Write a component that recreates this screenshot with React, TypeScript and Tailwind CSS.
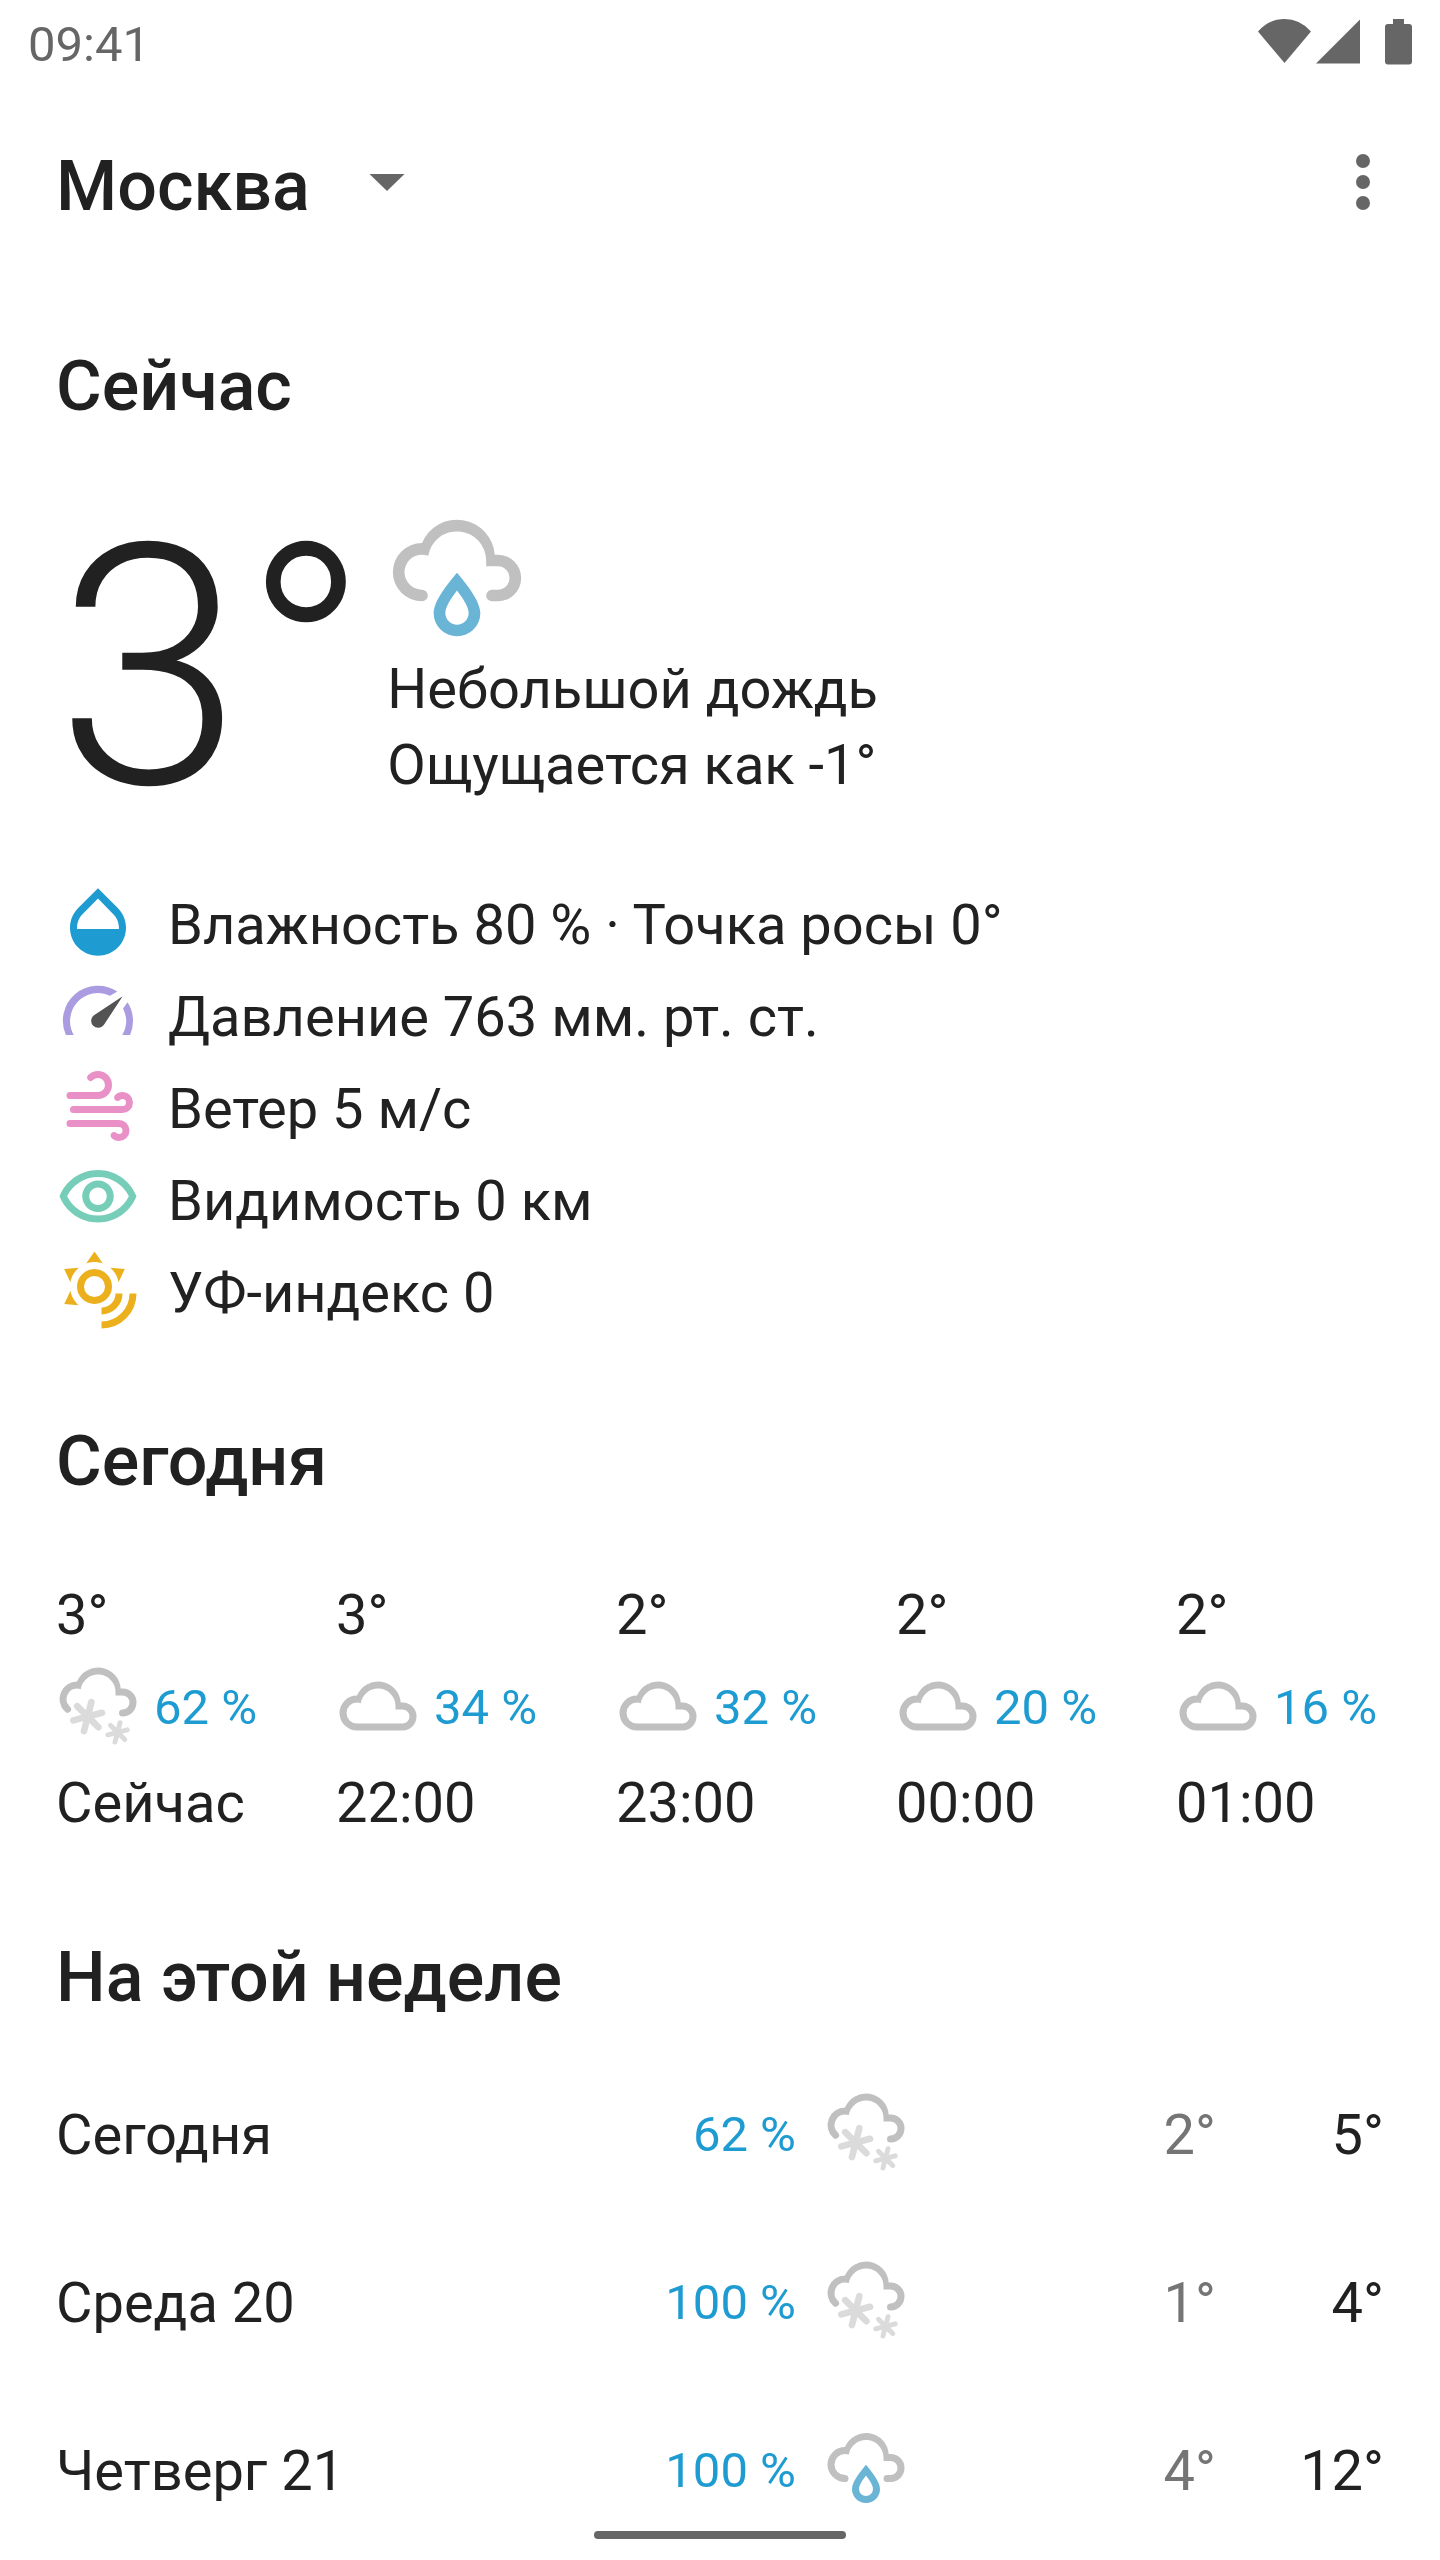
import React from "react";

type Weather = "rain" | "snow" | "cloud";

function WeatherIcon({ kind, className }: { kind: Weather; className: string }) {
  return (
    <svg viewBox="0 0 24 24" className={className} aria-hidden="true">
      {kind === "cloud" && (
        <path
          fill="#c0c0c0"
          fillRule="evenodd"
          d="M6 19A5 5 0 0 1 6 9A6.5 6.5 0 0 1 18.48 11H19A4 4 0 0 1 19 19ZM6 17H19A2 2 0 0 0 19 13H17V12A5 5 0 0 0 7.07 11.18Q6.6 11 6 11A3 3 0 0 0 6 17Z"
        />
      )}
      {kind === "rain" && (
        <>
          <path
            fill="#c0c0c0"
            d="M6 16A5 5 0 0 1 6 6A6.5 6.5 0 0 1 18.48 8H19A4 4 0 0 1 19 16H18A1 1 0 0 1 18 14H19A2 2 0 0 0 19 10H17V9A5 5 0 0 0 7.07 8.18Q6.6 8 6 8A3 3 0 0 0 6 14A1 1 0 0 1 6 16Z"
          />
          <path
            fill="#6ab4d6"
            fillRule="evenodd"
            d="M12 11.1C10.5 12.9 8 15.9 8 18A4 4 0 0 0 16 18C16 15.9 13.5 12.9 12 11.1ZM12 14.15C13.1 15.6 14 17 14 18A2 2 0 0 1 10 18C10 17 10.9 15.6 12 14.15Z"
          />
        </>
      )}
      {kind === "snow" && (
        <>
          <path
            fill="#c0c0c0"
            d="M2.55 13.6A5 5 0 0 1 6 5A6.5 6.5 0 0 1 18.48 7H19A4 4 0 0 1 19 15A1 1 0 0 1 19 13A2 2 0 0 0 19 9H17V8A5 5 0 0 0 7.07 7.18Q6.6 7 6 7A3 3 0 0 0 4.05 12.25A1 1 0 0 1 2.55 13.6Z"
          />
          <g stroke="#dbdbdb" strokeLinecap="round" fill="none">
            <path strokeWidth="1.9" d="M10.1 10.9L8 19.15M4.95 16.1L13.15 13.95M6.05 12.05L12.1 18.05" />
            <path strokeWidth="1.4" d="M18.3 16.75L16.85 22.3M14.8 20.25L20.35 18.8M15.55 17.5L19.65 21.6" />
          </g>
        </>
      )}
    </svg>
  );
}

function HumidityIcon() {
  return (
    <path
      fill="#1e9bd1"
      d="M17.66 8L12 2.35 6.34 8C4.78 9.56 4 11.64 4 13.64s.78 4.11 2.34 5.67 3.61 2.35 5.66 2.35 4.1-.79 5.66-2.35S20 15.64 20 13.64 19.22 9.56 17.66 8zM6 14c.01-2 .62-3.27 1.76-4.4L12 5.27l4.24 4.38C17.38 10.77 17.99 12 18 14H6z"
    />
  );
}

function PressureIcon() {
  return (
    <>
      <path
        fill="#ab9be0"
        d="M2.83 18A10 10 0 0 1 17.5 5.6L15.45 6.8A8 8 0 0 0 5.07 18ZM20.45 8.65A10 10 0 0 1 21.17 18H18.93A8 8 0 0 0 19.15 10.4Z"
      />
      <path fill="#535353" d="M19.05 6.95L13.65 15.15A2 2 0 1 1 10.85 12.35Z" />
    </>
  );
}

function WindIcon() {
  return (
    <path
      fill="#e991c6"
      d="M4 10A1 1 0 0 1 3 9A1 1 0 0 1 4 8H12A2 2 0 0 0 14 6A2 2 0 0 0 12 4C11.45 4 10.95 4.22 10.59 4.59C10.2 5 9.56 5 9.17 4.59C8.78 4.2 8.78 3.56 9.17 3.17C9.9 2.45 10.9 2 12 2A4 4 0 0 1 16 6A4 4 0 0 1 12 10H4M19 12A1 1 0 0 0 20 11A1 1 0 0 0 19 10C18.72 10 18.47 10.11 18.29 10.29C17.9 10.68 17.27 10.68 16.88 10.29C16.5 9.9 16.5 9.27 16.88 8.88C17.42 8.34 18.17 8 19 8A3 3 0 0 1 22 11A3 3 0 0 1 19 14H5A1 1 0 0 1 4 13A1 1 0 0 1 5 12H19M18 18H4A1 1 0 0 1 3 17A1 1 0 0 1 4 16H18A3 3 0 0 1 21 19A3 3 0 0 1 18 22C17.17 22 16.42 21.66 15.88 21.12C15.5 20.73 15.5 20.1 15.88 19.71C16.27 19.32 16.9 19.32 17.29 19.71C17.47 19.89 17.72 20 18 20A1 1 0 0 0 19 19A1 1 0 0 0 18 18Z"
    />
  );
}

function VisibilityIcon() {
  return (
    <path
      fill="#76cdb8"
      d="M12 6c3.79 0 7.17 2.13 8.82 5.5C19.17 14.87 15.79 17 12 17s-7.17-2.13-8.82-5.5C4.83 8.13 8.21 6 12 6m0-2C7 4 2.73 7.11 1 11.5 2.73 15.89 7 19 12 19s9.27-3.11 11-7.5C21.27 7.11 17 4 12 4zm0 5c1.38 0 2.5 1.12 2.5 2.5S13.38 14 12 14s-2.5-1.12-2.5-2.5S10.62 9 12 9m0-2c-2.48 0-4.5 2.02-4.5 4.5S9.52 16 12 16s4.5-2.02 4.5-4.5S14.48 7 12 7z"
    />
  );
}

function UvIcon() {
  return (
    <>
      <path
        fill="#ecb01d"
        transform="translate(-1 -1)"
        d="M12 2L14.39 5.42C13.65 5.15 12.84 5 12 5C11.16 5 10.35 5.15 9.61 5.42L12 2M3.34 7L7.5 6.65C6.9 7.16 6.36 7.78 5.94 8.5C5.5 9.24 5.25 10 5.11 10.79L3.34 7M3.36 17L5.12 13.23C5.26 14 5.53 14.78 5.95 15.5C6.37 16.24 6.91 16.86 7.5 17.37L3.36 17M20.65 7L18.88 10.79C18.74 10 18.47 9.23 18.05 8.5C17.63 7.78 17.1 7.15 16.5 6.64L20.65 7"
      />
      <g fill="none" stroke="#ecb01d" strokeWidth="2">
        <circle cx="11" cy="11" r="4" />
        <path d="M18 13A5 5 0 0 1 13 18M22 13A9 9 0 0 1 13 22" />
      </g>
    </>
  );
}

const metrics = [
  { Icon: HumidityIcon, text: "Влажность 80 % · Точка росы 0°" },
  { Icon: PressureIcon, text: "Давление 763 мм. рт. ст." },
  { Icon: WindIcon, text: "Ветер 5 м/с" },
  { Icon: VisibilityIcon, text: "Видимость 0 км" },
  { Icon: UvIcon, text: "УФ-индекс 0" },
];

const hours: { temp: string; kind: Weather; chance: string; time: string }[] = [
  { temp: "3°", kind: "snow", chance: "62 %", time: "Сейчас" },
  { temp: "3°", kind: "cloud", chance: "34 %", time: "22:00" },
  { temp: "2°", kind: "cloud", chance: "32 %", time: "23:00" },
  { temp: "2°", kind: "cloud", chance: "20 %", time: "00:00" },
  { temp: "2°", kind: "cloud", chance: "16 %", time: "01:00" },
];

const days: { day: string; chance: string; kind: Weather; low: string; high: string }[] = [
  { day: "Сегодня", chance: "62 %", kind: "snow", low: "2°", high: "5°" },
  { day: "Среда 20", chance: "100 %", kind: "snow", low: "1°", high: "4°" },
  { day: "Четверг 21", chance: "100 %", kind: "rain", low: "4°", high: "12°" },
];

function StatusBar() {
  return (
    <div className="flex h-[84px] items-start justify-between pl-7 pr-6 text-[#666666]">
      <time className="text-[49px] leading-[90px]">09:41</time>
      <svg width="160" height="84" viewBox="0 0 160 84" fill="currentColor" aria-hidden="true">
        <path d="M2 31.5Q13 19 28.5 19Q44 19 55 31.5L28.5 63Z" />
        <path d="M60 63.5H104V19.5Z" />
        <path d="M137 19h11v5h5a3 3 0 0 1 3 3v34.5a3 3 0 0 1-3 3h-21a3 3 0 0 1-3-3v-34.5a3 3 0 0 1 3-3h5Z" />
      </svg>
    </div>
  );
}

function AppBar() {
  return (
    <header className="flex h-[196px] items-center justify-between pl-14 pr-[35px]">
      <div className="grid items-center">
        <select
          aria-label="Город"
          defaultValue="Москва"
          className="col-start-1 row-start-1 h-[112px] w-[373px] appearance-none bg-transparent pt-2 text-[70px] font-medium leading-[96px] text-[#212121]"
        >
          <option>Москва</option>
        </select>
        <svg
          viewBox="0 0 24 24"
          fill="#666666"
          className="pointer-events-none col-start-1 row-start-1 size-[84px] justify-self-end"
          aria-hidden="true"
        >
          <path d="M7 9.7L12 14.6L17 9.7Z" />
        </svg>
      </div>
      <button type="button" aria-label="Меню" className="size-[84px]">
        <svg viewBox="0 0 24 24" fill="#666666" className="size-[84px]" aria-hidden="true">
          <circle cx="12" cy="6" r="2" />
          <circle cx="12" cy="12" r="2" />
          <circle cx="12" cy="18" r="2" />
        </svg>
      </button>
    </header>
  );
}

function SectionTitle({ children }: { children: React.ReactNode }) {
  return <h2 className="text-[70px] font-medium leading-[84px]">{children}</h2>;
}

export default function App() {
  return (
    <div className="min-h-screen bg-white font-['Roboto',sans-serif] text-[56px] text-[#212121]">
      <StatusBar />
      <AppBar />
      <main className="px-14">
        <section className="pt-16">
          <SectionTitle>Сейчас</SectionTitle>
          <div className="mt-20 flex items-start gap-[18px]">
            <p className="text-[336px] font-light leading-[320px]">3°</p>
            <div className="flex flex-col leading-[76px]">
              <WeatherIcon kind="rain" className="mb-[3px] size-[140px]" />
              <p>Небольшой дождь</p>
              <p>Ощущается как -1°</p>
            </div>
          </div>
          <ul className="mt-[52px]">
            {metrics.map(({ Icon, text }) => (
              <li key={text} className="flex h-[92px] items-start gap-7">
                <svg viewBox="0 0 24 24" className="size-[84px] shrink-0" aria-hidden="true">
                  <Icon />
                </svg>
                <span className="leading-[90px]">{text}</span>
              </li>
            ))}
          </ul>
        </section>

        <section className="pt-[79px]">
          <SectionTitle>Сегодня</SectionTitle>
          <ul className="mt-[63px] grid grid-cols-5 gap-x-[72px] whitespace-nowrap">
            {hours.map((h) => (
              <li key={h.time}>
                <p className="leading-[98px]">{h.temp}</p>
                <p className="flex items-center gap-[14px] text-[49px] leading-[80px] text-[#1e9bd1]">
                  <WeatherIcon kind={h.kind} className="size-[84px] shrink-0" />
                  <span className="pt-1">{h.chance}</span>
                </p>
                <p className="leading-[110px]">{h.time}</p>
              </li>
            ))}
          </ul>
        </section>

        <section className="pt-[77px]">
          <SectionTitle>На этой неделе</SectionTitle>
          <table className="mt-[29px] w-full table-fixed whitespace-nowrap">
            <tbody>
              {days.map((d) => (
                <tr key={d.day} className="h-[168px]">
                  <th scope="row" className="p-0 pt-1.5 text-left font-normal">
                    {d.day}
                  </th>
                  <td className="w-[250px] p-0 pt-1.5 text-right text-[49px] text-[#1e9bd1]">
                    {d.chance}
                  </td>
                  <td className="w-28 p-0 pl-7">
                    <WeatherIcon kind={d.kind} className="size-[84px]" />
                  </td>
                  <td className="w-[308px] p-0 pt-1.5 text-right text-[#757575]">{d.low}</td>
                  <td className="w-[168px] p-0 pt-1.5 text-right">{d.high}</td>
                </tr>
              ))}
            </tbody>
          </table>
        </section>
      </main>
      <div className="fixed inset-x-0 bottom-[21px] flex justify-center">
        <div className="h-2 w-[252px] rounded-full bg-[#666666]" />
      </div>
    </div>
  );
}
